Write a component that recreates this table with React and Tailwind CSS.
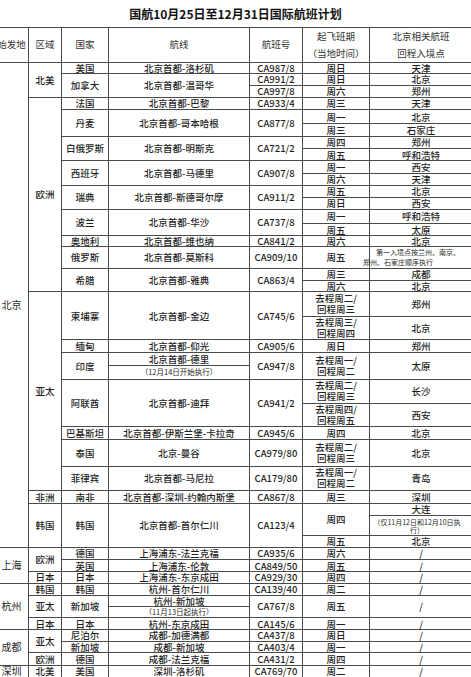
import React from "react";

const base = "border border-[#4a4a4a] p-0 text-center align-middle whitespace-nowrap";

function C({ r, children, className = "" }) {
  return (
    <td rowSpan={r} className={`${base} ${className}`}>
      {children}
    </td>
  );
}

function Two({ a, b }) {
  return (
    <div className="leading-[11px]">
      {a}
      <br />
      {b}
    </div>
  );
}

export default function App() {
  return (
    <div className="w-[471px] h-[677px] overflow-hidden bg-white text-[#1f1f1f] font-['Noto_Sans_CJK_SC',sans-serif]">
      <div className="h-[27px] flex items-center justify-center text-[12px] font-bold text-[#111]">
        国航10月25日至12月31日国际航班计划
      </div>
      <table className="table-fixed border-collapse -ml-[6px] w-[478px]">
        <colgroup>
          <col className="w-[34px]" />
          <col className="w-[33px]" />
          <col className="w-[47px]" />
          <col className="w-[141px]" />
          <col className="w-[53px]" />
          <col className="w-[67px]" />
          <col className="w-[103px]" />
        </colgroup>
        <thead>
          <tr className="h-[32px] text-[9.5px] text-[#333] leading-none">
            <C>始发地</C>
            <C>区域</C>
            <C>国家</C>
            <C>航线</C>
            <C>航班号</C>
            <C>
              <div className="leading-[17px]">
                起飞班期
                <br />
                （当地时间）
              </div>
            </C>
            <C>
              <div className="leading-[17px]">
                北京相关航班
                <br />
                回程入境点
              </div>
            </C>
          </tr>
        </thead>
        <tbody className="text-[9.5px] leading-[10px] font-medium">
          <tr className="h-[11px]">
            <C r={32} className="text-[10px] font-normal">北京</C>
            <C r={3}>北美</C>
            <C>美国</C>
            <C>北京首都-洛杉矶</C>
            <C>CA987/8</C>
            <C>周日</C>
            <C>天津</C>
          </tr>
          <tr className="h-[11.5px]">
            <C r={2}>加拿大</C>
            <C r={2}>北京首都-温哥华</C>
            <C>CA991/2</C>
            <C>周日</C>
            <C>北京</C>
          </tr>
          <tr className="h-[12px]">
            <C>CA997/8</C>
            <C>周六</C>
            <C>郑州</C>
          </tr>
          <tr className="h-[12.5px]">
            <C r={15}>欧洲</C>
            <C>法国</C>
            <C>北京首都-巴黎</C>
            <C>CA933/4</C>
            <C>周三</C>
            <C>天津</C>
          </tr>
          <tr className="h-[14px]">
            <C r={2}>丹麦</C>
            <C r={2}>北京首都-哥本哈根</C>
            <C r={2}>CA877/8</C>
            <C>周一</C>
            <C>北京</C>
          </tr>
          <tr className="h-[12.5px]">
            <C>周三</C>
            <C>石家庄</C>
          </tr>
          <tr className="h-[12.5px]">
            <C r={2}>白俄罗斯</C>
            <C r={2}>北京首都-明斯克</C>
            <C r={2}>CA721/2</C>
            <C>周四</C>
            <C>郑州</C>
          </tr>
          <tr className="h-[12px]">
            <C>周五</C>
            <C>呼和浩特</C>
          </tr>
          <tr className="h-[12.5px]">
            <C r={2}>西班牙</C>
            <C r={2}>北京首都-马德里</C>
            <C r={2}>CA907/8</C>
            <C>周一</C>
            <C>西安</C>
          </tr>
          <tr className="h-[12px]">
            <C>周六</C>
            <C>天津</C>
          </tr>
          <tr className="h-[12px]">
            <C r={2}>瑞典</C>
            <C r={2}>北京首都-斯德哥尔摩</C>
            <C r={2}>CA911/2</C>
            <C>周五</C>
            <C>北京</C>
          </tr>
          <tr className="h-[12px]">
            <C>周日</C>
            <C>西安</C>
          </tr>
          <tr className="h-[14.5px]">
            <C r={2}>波兰</C>
            <C r={2}>北京首都-华沙</C>
            <C r={2}>CA737/8</C>
            <C>周一</C>
            <C>呼和浩特</C>
          </tr>
          <tr className="h-[12px]">
            <C>周五</C>
            <C>太原</C>
          </tr>
          <tr className="h-[10.5px]">
            <C>奥地利</C>
            <C>北京首都-维也纳</C>
            <C>CA841/2</C>
            <C>周六</C>
            <C>北京</C>
          </tr>
          <tr className="h-[21.5px]">
            <C>俄罗斯</C>
            <C>北京首都-莫斯科</C>
            <C>CA909/10</C>
            <C>周五</C>
            <C>
              <div className="flex flex-col items-start text-[7px] leading-[10px] font-normal">
                <span className="ml-[6px]">第一入境点按兰州、南京、</span>
                <span className="-ml-[7px]">郑州、石家庄顺序执行</span>
              </div>
            </C>
          </tr>
          <tr className="h-[12px]">
            <C r={2}>希腊</C>
            <C r={2}>北京首都-雅典</C>
            <C r={2}>CA863/4</C>
            <C>周三</C>
            <C>成都</C>
          </tr>
          <tr className="h-[11.5px]">
            <C>周六</C>
            <C>北京</C>
          </tr>
          <tr className="h-[24.5px]">
            <C r={10}>亚太</C>
            <C r={2}>柬埔寨</C>
            <C r={2}>北京首都-金边</C>
            <C r={2}>CA745/6</C>
            <C><Two a="去程周二/" b="回程周三" /></C>
            <C>郑州</C>
          </tr>
          <tr className="h-[23.5px]">
            <C><Two a="去程周三/" b="回程周四" /></C>
            <C>北京</C>
          </tr>
          <tr className="h-[12.5px]">
            <C>缅甸</C>
            <C>北京首都-仰光</C>
            <C>CA905/6</C>
            <C>周日</C>
            <C>郑州</C>
          </tr>
          <tr className="h-[13.5px]">
            <C r={2}>印度</C>
            <C>北京首都-德里</C>
            <C r={2}>CA947/8</C>
            <C r={2}><Two a="去程周一/" b="回程周二" /></C>
            <C r={2}>太原</C>
          </tr>
          <tr className="h-[13.5px]">
            <C className="text-[7.5px] font-normal">（12月14日开始执行）</C>
          </tr>
          <tr className="h-[24.5px]">
            <C r={2}>阿联酋</C>
            <C r={2}>北京首都-迪拜</C>
            <C r={2}>CA941/2</C>
            <C><Two a="去程周二/" b="回程周三" /></C>
            <C>长沙</C>
          </tr>
          <tr className="h-[23px]">
            <C><Two a="去程周四/" b="回程周五" /></C>
            <C>西安</C>
          </tr>
          <tr className="h-[13px]">
            <C>巴基斯坦</C>
            <C>北京首都-伊斯兰堡-卡拉奇</C>
            <C>CA945/6</C>
            <C>周四</C>
            <C>北京</C>
          </tr>
          <tr className="h-[26.5px]">
            <C>泰国</C>
            <C>北京-曼谷</C>
            <C>CA979/80</C>
            <C><Two a="去程周二/" b="回程周三" /></C>
            <C>北京</C>
          </tr>
          <tr className="h-[24.5px]">
            <C>菲律宾</C>
            <C>北京首都-马尼拉</C>
            <C>CA179/80</C>
            <C><Two a="去程周一/" b="回程周二" /></C>
            <C>青岛</C>
          </tr>
          <tr className="h-[12.5px]">
            <C>非洲</C>
            <C>南非</C>
            <C>北京首都-深圳-约翰内斯堡</C>
            <C>CA867/8</C>
            <C>周三</C>
            <C>深圳</C>
          </tr>
          <tr className="h-[12.5px]">
            <C r={3}>韩国</C>
            <C r={3}>韩国</C>
            <C r={3}>北京首都-首尔仁川</C>
            <C r={3}>CA123/4</C>
            <C r={2}>周四</C>
            <C>大连</C>
          </tr>
          <tr className="h-[20px]">
            <C className="text-[7px] leading-[8px] font-normal">
              <div className="pr-[8px]">
                （仅11月12日和12月10日执
                <br />
                行）
              </div>
            </C>
          </tr>
          <tr className="h-[11.5px]">
            <C>周五</C>
            <C>北京</C>
          </tr>
          <tr className="h-[12.5px]">
            <C r={3} className="text-[10px] font-normal">上海</C>
            <C r={2}>欧洲</C>
            <C>德国</C>
            <C>上海浦东-法兰克福</C>
            <C>CA935/6</C>
            <C>周六</C>
            <C>/</C>
          </tr>
          <tr className="h-[12px]">
            <C>英国</C>
            <C>上海浦东-伦敦</C>
            <C>CA849/50</C>
            <C>周五</C>
            <C>/</C>
          </tr>
          <tr className="h-[11.5px]">
            <C>日本</C>
            <C>日本</C>
            <C>上海浦东-东京成田</C>
            <C>CA929/30</C>
            <C>周四</C>
            <C>/</C>
          </tr>
          <tr className="h-[12px]">
            <C r={4} className="text-[10px] font-normal">杭州</C>
            <C>韩国</C>
            <C>韩国</C>
            <C>杭州-首尔仁川</C>
            <C>CA139/40</C>
            <C>周二</C>
            <C>/</C>
          </tr>
          <tr className="h-[11.5px]">
            <C r={2}>亚太</C>
            <C r={2}>新加坡</C>
            <C>杭州-新加坡</C>
            <C r={2}>CA767/8</C>
            <C r={2}>周五</C>
            <C r={2}>/</C>
          </tr>
          <tr className="h-[11px]">
            <C className="text-[7.5px] font-normal">（11月13日起执行）</C>
          </tr>
          <tr className="h-[12px]">
            <C>日本</C>
            <C>日本</C>
            <C>杭州-东京成田</C>
            <C>CA145/6</C>
            <C>周一</C>
            <C>/</C>
          </tr>
          <tr className="h-[11.5px]">
            <C r={3} className="text-[10px] font-normal">成都</C>
            <C r={2}>亚太</C>
            <C>尼泊尔</C>
            <C>成都-加德满都</C>
            <C>CA437/8</C>
            <C>周日</C>
            <C>/</C>
          </tr>
          <tr className="h-[11.5px]">
            <C>新加坡</C>
            <C>成都-新加坡</C>
            <C>CA403/4</C>
            <C>周一</C>
            <C>/</C>
          </tr>
          <tr className="h-[12.5px]">
            <C>欧洲</C>
            <C>德国</C>
            <C>成都-法兰克福</C>
            <C>CA431/2</C>
            <C>周四</C>
            <C>/</C>
          </tr>
          <tr className="h-[12.5px]">
            <C className="text-[10px] font-normal">深圳</C>
            <C>北美</C>
            <C>美国</C>
            <C>深圳-洛杉矶</C>
            <C>CA769/70</C>
            <C>周二</C>
            <C>/</C>
          </tr>
        </tbody>
      </table>
    </div>
  );
}
